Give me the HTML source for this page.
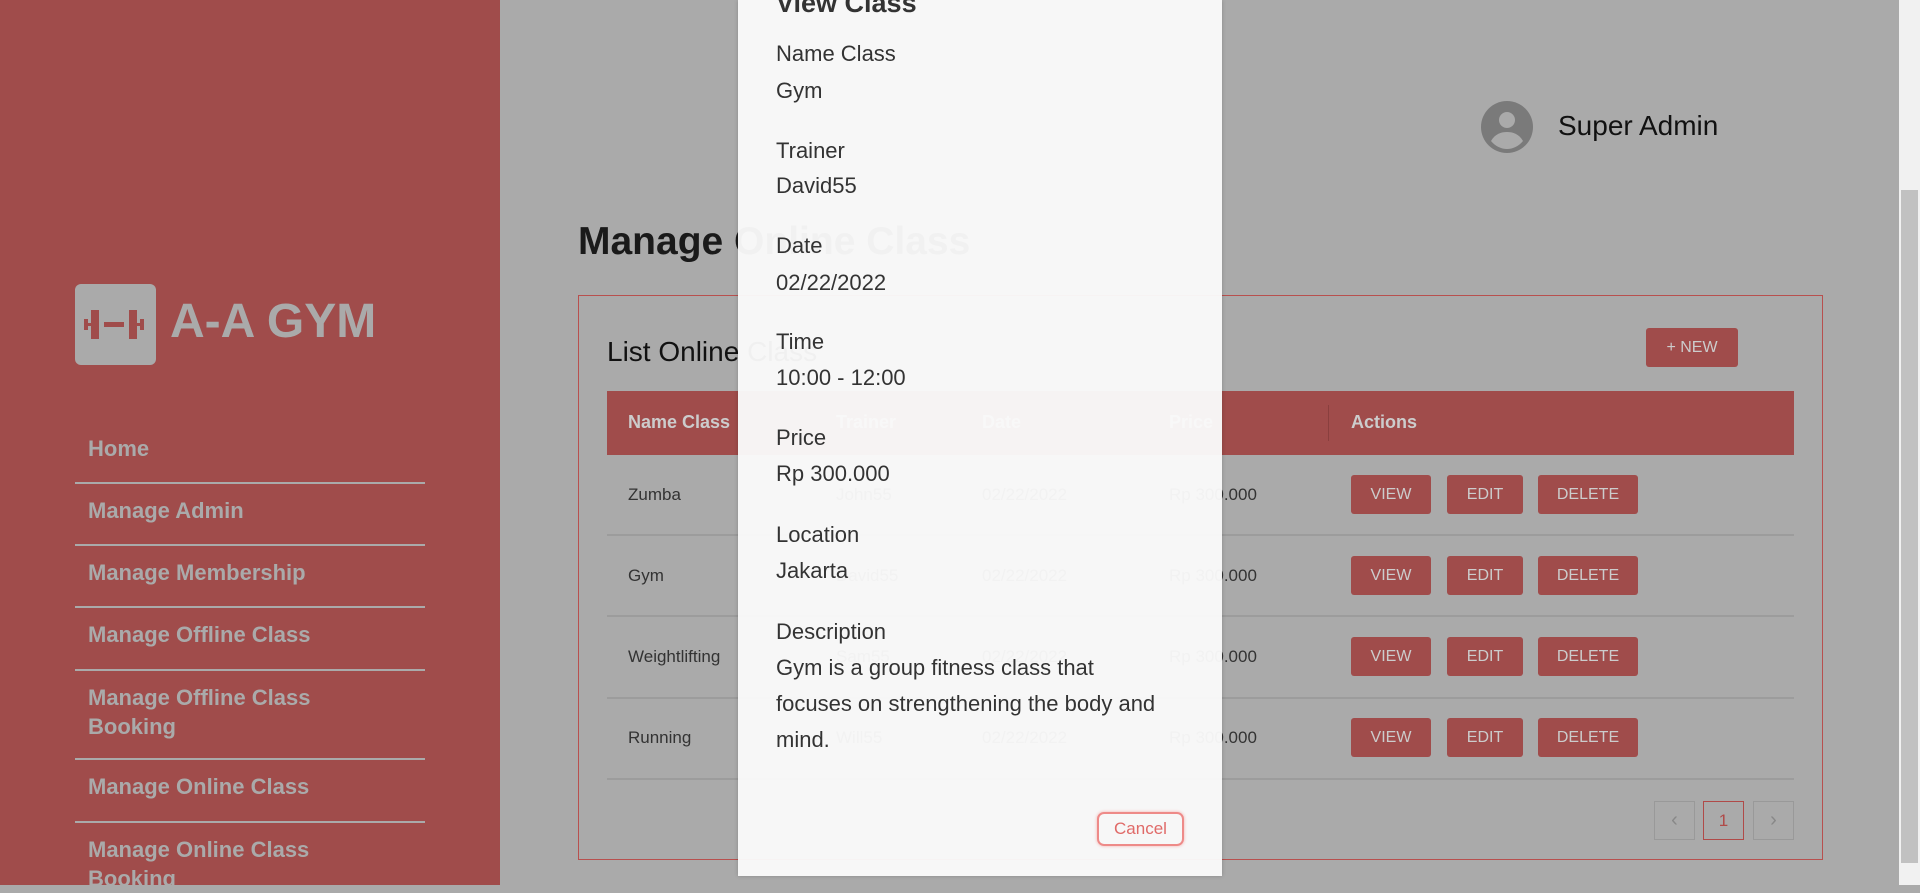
<!DOCTYPE html>
<html><head><meta charset="utf-8"><style>
*{margin:0;padding:0;box-sizing:border-box}
body{width:1920px;height:885px;overflow:hidden;background:#aaaaaa;font-family:"Liberation Sans",sans-serif;position:relative}
.abs{position:absolute}
.side{left:0;top:0;width:500px;height:885px;background:#a04c4b}
.logo{left:75px;top:284px;width:81px;height:81px;background:#aaa;border-radius:6px}
.brand{left:170px;top:294px;font-size:48px;font-weight:bold;color:#aaa}
.nav{left:75px;width:350px;color:#aaa;font-weight:bold;font-size:22px;line-height:29px;padding-left:13px}
.line{left:75px;width:350px;height:2px;background:#aaa}
.card{left:578px;top:295px;width:1245px;height:565px;border:1px solid #b8504e}
.btn{position:absolute;background:#a04c4b;color:#ccc;font-size:16px;border-radius:3px;display:flex;align-items:center;justify-content:center}
.th{position:absolute;top:412px;color:#ccc;font-weight:bold;font-size:18px}
.td{position:absolute;font-size:17px;color:#333}
.rl{position:absolute;left:607px;width:1187px;height:2px;background:#9c9c9c}
.pg{position:absolute;top:801px;width:41px;height:39px;border:1px solid #999;color:#888;display:flex;align-items:center;justify-content:center;font-size:20px}
.modal{left:738px;top:0;width:484px;height:876px;background:rgba(250,250,250,0.96);box-shadow:0 0 4px rgba(0,0,0,.2)}
.mt{position:absolute;left:776px;font-size:22px;color:#333;white-space:nowrap}
</style></head><body>
<div class="abs side"></div>
<div class="abs logo"><svg width="81" height="81" viewBox="0 0 81 81"><g fill="#a04c4b"><rect x="9" y="35" width="4" height="11"/><rect x="16" y="26" width="8" height="29"/><rect x="29" y="38" width="20" height="5"/><rect x="54" y="26" width="8" height="29"/><rect x="65" y="35" width="4" height="11"/><rect x="12" y="39" width="4" height="3"/><rect x="62" y="39" width="4" height="3"/></g></svg></div>
<div class="abs brand">A-A GYM</div>
<div class="abs nav" style="top:434px">Home</div>
<div class="abs line" style="top:482px"></div>
<div class="abs nav" style="top:496px">Manage Admin</div>
<div class="abs line" style="top:544px"></div>
<div class="abs nav" style="top:558px">Manage Membership</div>
<div class="abs line" style="top:606px"></div>
<div class="abs nav" style="top:620px">Manage Offline Class</div>
<div class="abs line" style="top:669px"></div>
<div class="abs nav" style="top:683px">Manage Offline Class<br>Booking</div>
<div class="abs line" style="top:758px"></div>
<div class="abs nav" style="top:772px">Manage Online Class</div>
<div class="abs line" style="top:821px"></div>
<div class="abs nav" style="top:835px">Manage Online Class<br>Booking</div>

<svg class="abs" style="left:1481px;top:101px" width="52" height="52" viewBox="0 0 52 52"><circle cx="26" cy="26" r="26" fill="#7a7a7a"/><circle cx="26" cy="19" r="8" fill="#aaa"/><path d="M10 40c4-7 10-9 16-9s12 2 16 9c-4 5-10 8-16 8s-12-3-16-8z" fill="#aaa"/></svg>
<div class="abs" style="left:1558px;top:110px;font-size:28px;color:#111">Super Admin</div>
<div class="abs" style="left:578px;top:220px;font-size:39px;font-weight:bold;color:#1a1a1a">Manage Online Class</div>

<div class="abs card"></div>
<div class="abs" style="left:607px;top:336px;font-size:28px;color:#111">List Online Class</div>
<div class="btn" style="left:1646px;top:328px;width:92px;height:39px">+ NEW</div>
<div class="abs" style="left:607px;top:391px;width:1187px;height:64px;background:#a04c4b"></div>
<div class="abs" style="left:1328px;top:405px;width:1px;height:36px;background:#8a3f3e"></div>
<div class="th" style="left:628px">Name Class</div>
<div class="th" style="left:836px">Trainer</div>
<div class="th" style="left:982px">Date</div>
<div class="th" style="left:1169px">Price</div>
<div class="th" style="left:1351px">Actions</div>

<div class="td" style="left:628px;top:485px">Zumba</div><div class="td" style="left:836px;top:485px">John55</div><div class="td" style="left:982px;top:485px">02/22/2022</div><div class="td" style="left:1169px;top:485px">Rp 300.000</div>
<div class="btn" style="left:1351px;top:475px;width:80px;height:39px">VIEW</div><div class="btn" style="left:1447px;top:475px;width:76px;height:39px">EDIT</div><div class="btn" style="left:1538px;top:475px;width:100px;height:39px">DELETE</div>
<div class="rl" style="top:534px"></div>
<div class="td" style="left:628px;top:566px">Gym</div><div class="td" style="left:836px;top:566px">David55</div><div class="td" style="left:982px;top:566px">02/22/2022</div><div class="td" style="left:1169px;top:566px">Rp 300.000</div>
<div class="btn" style="left:1351px;top:556px;width:80px;height:39px">VIEW</div><div class="btn" style="left:1447px;top:556px;width:76px;height:39px">EDIT</div><div class="btn" style="left:1538px;top:556px;width:100px;height:39px">DELETE</div>
<div class="rl" style="top:615px"></div>
<div class="td" style="left:628px;top:647px">Weightlifting</div><div class="td" style="left:836px;top:647px">Sam55</div><div class="td" style="left:982px;top:647px">02/22/2022</div><div class="td" style="left:1169px;top:647px">Rp 300.000</div>
<div class="btn" style="left:1351px;top:637px;width:80px;height:39px">VIEW</div><div class="btn" style="left:1447px;top:637px;width:76px;height:39px">EDIT</div><div class="btn" style="left:1538px;top:637px;width:100px;height:39px">DELETE</div>
<div class="rl" style="top:697px"></div>
<div class="td" style="left:628px;top:728px">Running</div><div class="td" style="left:836px;top:728px">Will55</div><div class="td" style="left:982px;top:728px">02/22/2022</div><div class="td" style="left:1169px;top:728px">Rp 300.000</div>
<div class="btn" style="left:1351px;top:718px;width:80px;height:39px">VIEW</div><div class="btn" style="left:1447px;top:718px;width:76px;height:39px">EDIT</div><div class="btn" style="left:1538px;top:718px;width:100px;height:39px">DELETE</div>
<div class="rl" style="top:778px"></div>
<div class="pg" style="left:1654px">‹</div>
<div class="pg" style="left:1703px;border-color:#b04a48;color:#b04a48;font-size:17px">1</div>
<div class="pg" style="left:1753px">›</div>

<div class="abs" style="left:1899px;top:0;width:21px;height:885px;background:#f1f1f1"></div>
<div class="abs" style="left:1901px;top:190px;width:17px;height:673px;background:#c1c1c1"></div>

<div class="abs modal"></div>
<div class="mt" style="top:-12px;font-size:27px;font-weight:bold">View Class</div>
<div class="mt" style="top:41px">Name Class</div><div class="mt" style="top:78px">Gym</div>
<div class="mt" style="top:138px">Trainer</div><div class="mt" style="top:173px">David55</div>
<div class="mt" style="top:233px">Date</div><div class="mt" style="top:270px">02/22/2022</div>
<div class="mt" style="top:329px">Time</div><div class="mt" style="top:365px">10:00 - 12:00</div>
<div class="mt" style="top:425px">Price</div><div class="mt" style="top:461px">Rp 300.000</div>
<div class="mt" style="top:522px">Location</div><div class="mt" style="top:558px">Jakarta</div>
<div class="mt" style="top:619px">Description</div>
<div class="mt" style="top:650px;line-height:36px">Gym is a group fitness class that<br>focuses on strengthening the body and<br>mind.</div>
<div class="abs" style="left:1097px;top:812px;width:87px;height:34px;border:2px solid #ee8a88;border-radius:7px;color:#e06a68;font-size:17px;display:flex;align-items:center;justify-content:center;box-shadow:0 0 3px #f4b0ae">Cancel</div>
</body></html>
